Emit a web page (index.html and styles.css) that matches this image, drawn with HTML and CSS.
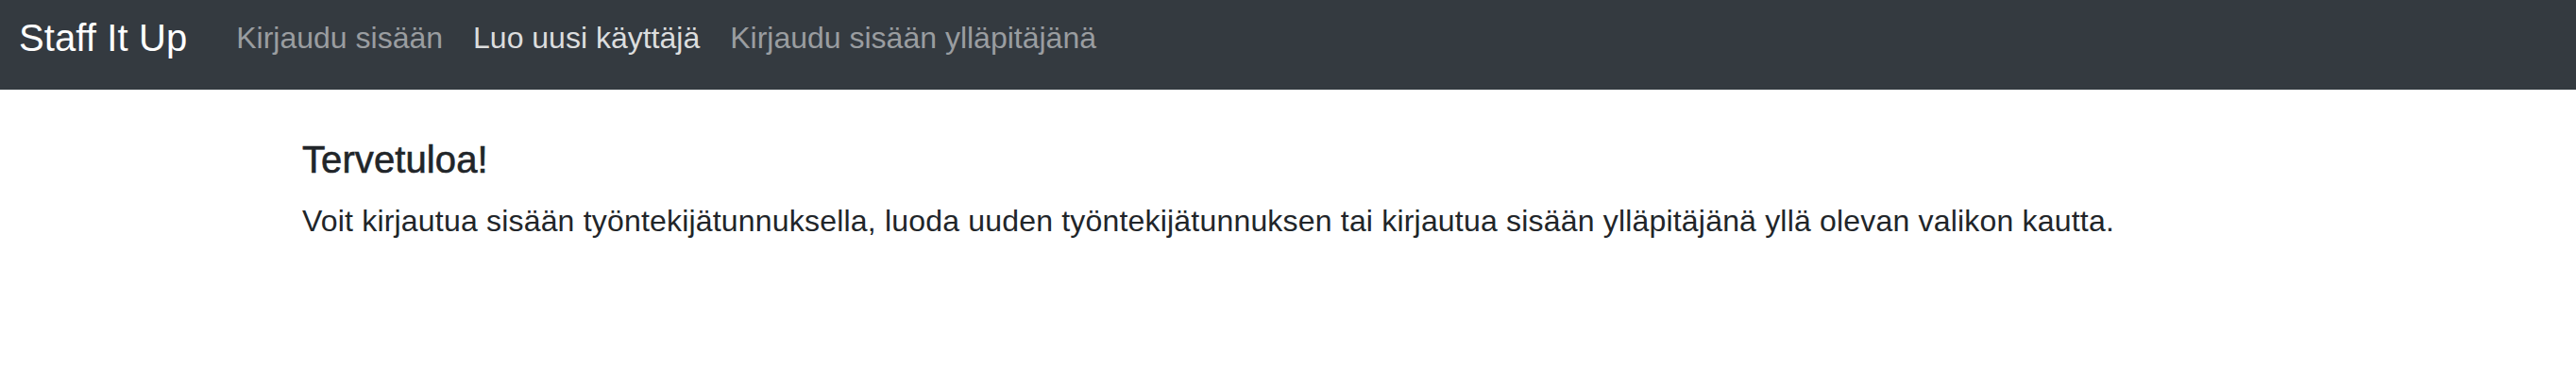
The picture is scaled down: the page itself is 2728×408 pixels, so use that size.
FILE: index.html
```html
<!DOCTYPE html>
<html lang="fi">
<head>
<meta charset="utf-8">
<title>Staff It Up</title>
<link rel="stylesheet" href="styles.css">
</head>
<body>
<nav class="navbar">
  <a class="brand" href="#">Staff It Up</a>
  <ul class="nav">
    <li><a class="nav-link" href="#">Kirjaudu sisään</a></li>
    <li><a class="nav-link active" href="#">Luo uusi käyttäjä</a></li>
    <li><a class="nav-link" href="#">Kirjaudu sisään ylläpitäjänä</a></li>
  </ul>
</nav>
<main class="container">
  <h5 class="title">Tervetuloa!</h5>
  <p class="lead-text">Voit kirjautua sisään työntekijätunnuksella, luoda uuden työntekijätunnuksen tai kirjautua sisään ylläpitäjänä yllä olevan valikon kautta.</p>
</main>
</body>
</html>
```
FILE: styles.css
```css
html, body {
  margin: 0;
  padding: 0;
  background: #ffffff;
  font-family: "Liberation Sans", Arial, sans-serif;
  color: #212529;
}

.navbar {
  display: flex;
  align-items: flex-start;
  height: 95px;
  box-sizing: border-box;
  padding: 0 20px;
  background: #343a40;
}

.brand {
  margin-top: 10px;
  font-size: 40px;
  line-height: 60px;
  color: #ffffff;
  text-decoration: none;
  white-space: nowrap;
  letter-spacing: 0.1px;
}

.nav {
  display: flex;
  list-style: none;
  margin: 16px 0 0 36px;
  padding: 0;
}

.nav-link {
  display: block;
  padding: 0 16px;
  font-size: 32px;
  line-height: 48px;
  color: #9a9da0;
  text-decoration: none;
  white-space: nowrap;
}

.nav-link.active {
  color: #dcddde;
}

.container {
  padding: 0 0 0 320px;
}

.title {
  margin: 50px 0 0;
  font-size: 40px;
  line-height: 48px;
  font-weight: normal;
  color: #212529;
  -webkit-text-stroke: 0.6px #212529;
  letter-spacing: 0.1px;
}

.lead-text {
  margin: 17px 0 0;
  font-size: 32px;
  line-height: 48px;
  letter-spacing: 0.19px;
}
```
